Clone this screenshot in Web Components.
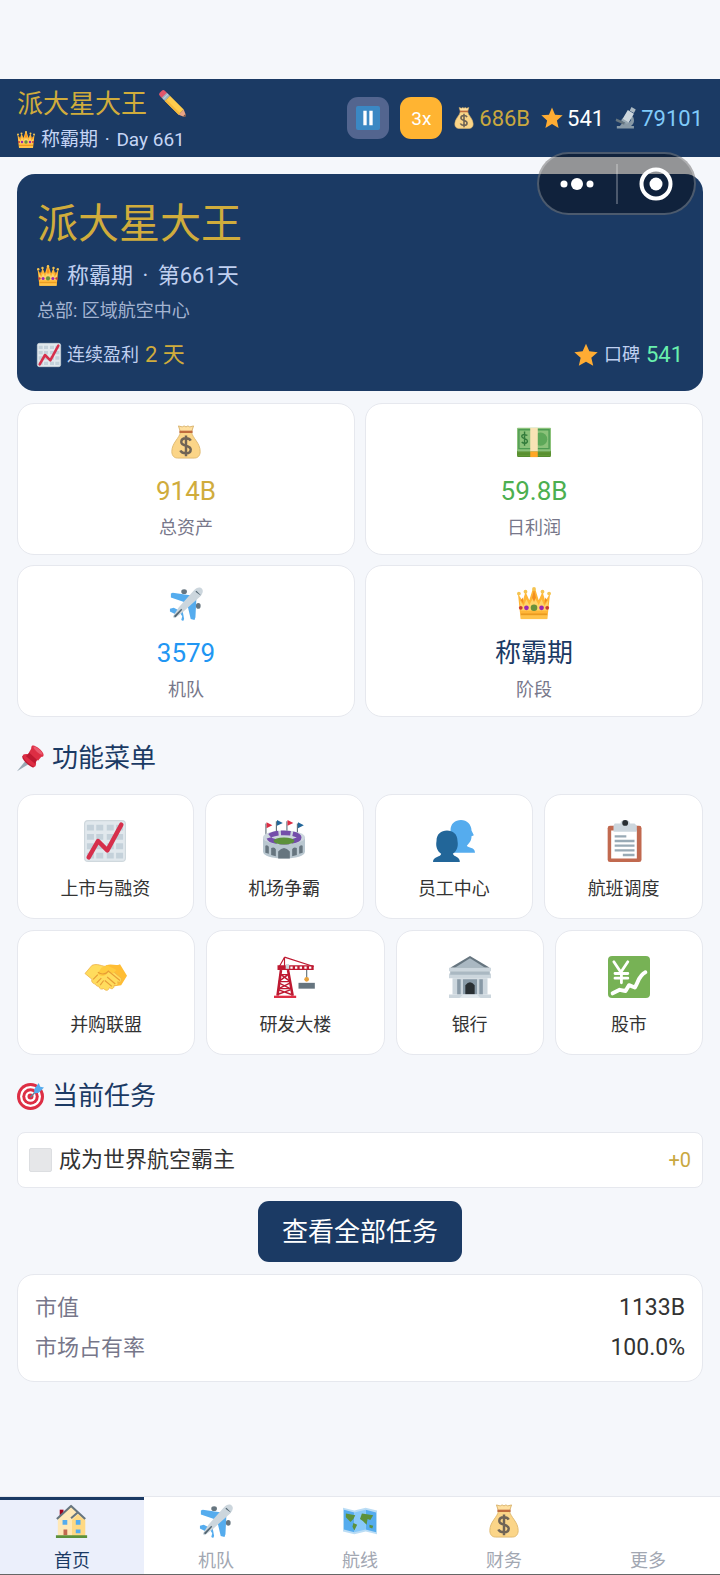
<!DOCTYPE html>
<html lang="zh-CN">
<head>
<meta charset="utf-8">
<meta name="viewport" content="width=device-width, initial-scale=1">
<title>派大星大王</title>
<style>
  body {
    margin: 0;
    background: #f5f7fb;
    color: #333;
    font-family: Roboto, "Noto Sans CJK SC", sans-serif;
    font-size: 22px;
  }
</style>
</head>
<body>
<air-app></air-app>

<script>
const ICONS = {
  pencil: `
    <g transform="rotate(45 18 18)">
      <path fill="#e0566b" d="M-3 13h5v10h-5a3 3 0 0 1-3-3v-4a3 3 0 0 1 3-3z"/>
      <path fill="#9fb4c2" d="M1 13h6v10H1z"/><path fill="#c8d6de" d="M3 13h1v10H3z"/>
      <path fill="#ffcc4d" d="M7 13h27v10H7z"/><path fill="#f5b83d" d="M7 20h27v3H7z"/>
      <path fill="#e9a587" d="M34 13l7 3q3 2 0 4l-7 3z"/><path fill="#66493f" d="M40 15.500l3 2.500-3 2.500z"/>
    </g>`,
  crown: `
    <path fill="#ffb636" d="M1 7l5 8 3-10 4 9 4-13h2l4 13 4-9 3 10 5-8-2 19-1 8H4l-1-8z"/>
    <path fill="#ffd469" d="M3 14l4 6 3-7 3 6 5-9 5 9 3-6 3 7 4-6-1 11H4z"/>
    <path fill="#f28f20" d="M6 11l1 7-3-4zm12-8l2 8-2 5-2-5zm12 8l-1 7 3-4z"/>
    <path fill="#e99a20" d="M4 28h28v2H4z"/><path fill="#ffc24a" d="M4 30h28v4H4z"/>
    <g fill="#f4c452"><circle cx="2" cy="7" r="2"/><circle cx="9" cy="5" r="2"/><circle cx="18" cy="2" r="2"/><circle cx="27" cy="5" r="2"/><circle cx="34" cy="7" r="2"/></g>
    <circle cx="18" cy="22" r="3.500" fill="#69913b"/>
    <circle cx="10" cy="22" r="2.500" fill="#9c28b1"/><circle cx="26" cy="22" r="2.500" fill="#9c28b1"/>
    <circle cx="4" cy="22" r="2" fill="#ca3b30"/><circle cx="32" cy="22" r="2" fill="#ca3b30"/>`,
  pause: `
    <rect width="36" height="36" rx="3" fill="#3b88c3"/>
    <path fill="#fff" d="M11 7h5v22h-5zm9 0h5v22h-5z"/>`,
  bag: `
    <path fill="#ffe0a0" stroke="#d9b26b" stroke-width="1" d="M12 7L10 1l4 1 2-1 2 1 2-1 2 1 4-1-2 6z"/>
    <path fill="#fbd588" stroke="#dfb970" stroke-width="1" d="M12 8h12c1 6 9 11 9 20 0 5-3 7-6 7H9c-3 0-6-2-6-7 0-9 8-14 9-20z"/>
    <path fill="#c06c3e" d="M11 6h14v2.500H11z"/>
    <path fill="none" stroke="#706456" stroke-width="2.600" d="M23 16.500c-1-2-3-2.500-5-2.500-3 0-5 1.500-5 4 0 5 10 3 10 8 0 3-2 4-5 4s-5-1-6-3M18 11v22"/>`,
  star: `<path fill="#ffac33" d="M18 1l5 11.500 12.500 1.200-9.500 8.300 2.800 12.300L18 28 7.200 34.300 10 22 .5 13.700 13 12.500z"/>`,
  microscope: `
    <path fill="#8899a6" d="M3 31h28v4H3zM8 31l4-5h9c5-2 6-5 5-9l3-2c4 7 2 13-3 16z"/>
    <path fill="#66757f" d="M2 19l14 6-1 4-14-6z"/>
    <path fill="#ccd6dd" d="M21 5l10 6-9 15-10-6z"/><path fill="#9aaab4" d="M12 19l10 6-2 3-10-6z"/>
    <path fill="#aab8c2" d="M27 0l7 4-3 6-7-4z"/>`,
  chart: `
    <rect x=".5" y=".5" width="35" height="35" rx="3" fill="#e1e8ed" stroke="#cfd8dd"/>
    <path fill="#c4d1da" d="M2.500 4h6v5h-6zm8 0h6v5h-6zm9 0h6v5h-6zm8 0h6v5h-6zM2.500 12h6v5h-6zm8 0h6v5h-6zm9 0h6v5h-6zm8 0h6v5h-6zM2.500 20h6v5h-6zm8 0h6v5h-6zm9 0h6v5h-6zm8 0h6v5h-6zM2.500 28h6v5h-6zm8 0h6v5h-6zm9 0h6v5h-6zm8 0h6v5h-6z"/>
    <path fill="none" stroke="#d62f4b" stroke-width="3.800" stroke-linecap="round" stroke-linejoin="round" d="M4 32l8-14 8 8L32 4"/>`,
  cash: `
    <path fill="#558b2f" d="M0 26h36v7l-1 1H1l-1-1z"/><path fill="#689f38" d="M0 29h36v1H0zm0 2.500h36v1H0z"/>
    <rect y="3" width="36" height="25" rx="1" fill="#8bc27a"/>
    <path fill="none" stroke="#4d9b52" stroke-width="1.500" d="M2 5h32v20H2z"/>
    <circle cx="25" cy="15" r="7" fill="#5da859"/>
    <path fill="none" stroke="#327b3b" stroke-width="1.500" d="M11 11q-6-2-6 1c0 3 6 2 6 5s-4 3-6 1M8 7v15"/>
    <path fill="#f8e3b5" d="M14 3h8v25h-8z"/><path fill="#ffa726" d="M14 28h8v6h-8z"/>`,
  plane: `
    <g fill="#66757f"><ellipse cx="16" cy="5" rx="3" ry="2.500"/><ellipse cx="31" cy="20" rx="2.500" ry="3"/></g>
    <path fill="#55acee" d="M2 7l2-1 20 3-5 8-17-6zM29 12l-1 20-1 3-4-1-4-17zM1 23l4-1 8 4-4 4-8-4zM13 35l1-4-4-6 4-2 2 11-1 2z"/>
    <path fill="#ccd6dd" d="M34 1c3 2 2 6-1 9L13 28l-7 5c-2 0-2-2-1-3l5-8L26 4c3-3 5-4 8-3z"/>
    <path fill="#536672" d="M29 4l5 5-2-1-4-3zM5 31l8-8 1 1-7 8z"/>`,
  pin: `
    <path fill="#99aab5" d="M0 35l13-16 5 5z"/>
    <path fill="#be1931" d="M7 15c4-4 8-1 12 3s7 8 3 12c-4 0-16-10-15-15z"/>
    <path fill="#dd2e44" d="M8 13c5-2 9-1 13 3s6 9 3 13c-5 0-17-10-16-16z"/>
    <path fill="#be1931" d="M17 9l11 9-4 7-12-10z"/>
    <path fill="#dd2e44" d="M20 3l13 12-5 6-12-11z"/>
    <path fill="#dd2e44" d="M20 1c4-2 18 9 15 14-3 4-20-9-15-14z"/><path fill="#ea596e" d="M22 2c3-1 13 7 12 11-2 1-13-7-12-11z"/>`,
  stadium: `
    <path fill="none" stroke="#66757f" stroke-width="1" d="M2.500 3v12m9-14v10m9-10v10M29.500 3v11"/>
    <path fill="#dd2e44" d="M3 2l5 2.500L3 7zM21 0l5 2.500L21 5z"/><path fill="#226699" d="M12 0l5 2.500L12 5zM30 2l5 2.500L30 7z"/>
    <path fill="#b9c7d0" d="M0 15h36v12c0 4-8 6-18 6S0 31 0 27z"/>
    <ellipse cx="18" cy="15" rx="18" ry="6" fill="#ccd6dd"/>
    <ellipse cx="18" cy="15" rx="13" ry="4" fill="none" stroke="#744eaa" stroke-width="4" stroke-dasharray="8 2"/>
    <ellipse cx="18" cy="18" rx="9" ry="3" fill="#5c913b"/>
    <path fill="#66757f" d="M13 33v-6q5-6 10 0v6zM2 22q2-1 3 1v6l-3-1zm5 2q3-1 4 1v6l-4-1zm27-2q-2-1-3 1v6l3-1zm-5 2q-3-1-4 1v6l4-1z"/>`,
  people: `
    <path fill="#55acee" d="M15 9C15 3 19 0 24 0s9 4 9 9l2 4-2 1c0 4-2 6-4 8 1 2 7 1 7 6H17z"/>
    <path fill="#269" d="M3 18c0-6 4-9 9-9s9 3 9 9c1 5-1 9-4 11 1 3 6 2 6 7H0c0-5 7-4 7-7-3-2-5-6-4-11z"/>`,
  clipboard: `
    <rect x="4" y="5" width="29" height="31" rx="2" fill="#c1694f"/>
    <path fill="#fff" d="M7 9h22v24H7z"/>
    <path fill="#ccd6dd" d="M10 3h5q0-3 4-3t4 3h4l2 2v5H9V5z"/>
    <circle cx="19" cy="2.500" r="2.500" fill="#292f33"/>
    <path fill="#99aab5" d="M10 13h10v2H10zm0 4h17v2H10zm0 4h17v2H10zm0 4h17v2H10zm7 4h10v2H17z"/>`,
  handshake: `
    <path fill="#ffbd34" d="M18 8c5-2 8 1 12-1l6 10-5 8-13 2-10-8z"/>
    <path fill="#ffdc5d" stroke="#eeb34b" stroke-width=".7" d="M6 8c5-2 8 1 13 1l12 10c1 3-1 4-3 3 1 3-1 4-3 3 0 3-2 4-4 2-1 3-3 3-5 1-2 1-4 0-4-2-2 0-3-1-3-2-2 0-4-2-3-4L0 15z"/>
    <path fill="#ffcb3f" d="M14 10l5-2 8 4-3 3-4-1c-3 4-7 4-9 1z"/>
    <path fill="none" stroke="#e79d36" d="M11 14c3 2 7 2 9-1l10 8M19 18l7 6M17 21l6 5M7 20l4-4m-1 7l4-4m-1 6l3-4"/>`,
  crane: `
    <path fill="none" stroke="#be1931" stroke-width="1" d="M9 1L4 10M9 1l25 8M9 1v8"/>
    <path fill="#be1931" d="M3 8h9v4H3zM12 8h22v4H12z"/><path fill="#fff" d="M14 9h2v2h-2zm4 0h2v2h-2zm4 0h2v2h-2zm4 0h2v2h-2zm4 0h2v2h-2z"/>
    <path fill="#ccd6dd" d="M10 7h3v4h-3z"/>
    <path fill="none" stroke="#be1931" stroke-width="2.200" d="M6 12L3 34M12 12l4 22"/>
    <path fill="none" stroke="#be1931" stroke-width="1.200" d="M5 16h8M5 22h9M4 28h11M6 16l8 6M12 16l-8 6M4 23l10 5M14 23L4 28M3 33l11-4M4 29l11 4"/>
    <path fill="#dd2e44" d="M0 34h19v2H0z"/>
    <path stroke="#66757f" d="M28 12v7"/><circle cx="28" cy="20" r="2" fill="#e9a23b"/><path fill="#66757f" d="M21 23h14v5H21z"/>`,
  bank: `
    <path fill="#66757f" d="M18 0l17 10H1z"/><path fill="#aab8c2" d="M18 2l13 8H5z"/>
    <path fill="#ccd6dd" d="M0 10h36v3H0zM0 15h36v4H0z"/><path fill="#aab8c2" d="M1 13h34v3H1z"/>
    <path fill="#ccd6dd" d="M3 19h30v14H3z"/><path fill="#8899a6" d="M7 20h3v13H7zm19 0h3v13h-3zM12 20h12v13H12z"/>
    <path fill="#292f33" d="M14 33v-8q4-5 8 0v8z"/>
    <path fill="#ccd6dd" d="M0 33h36v3H0z"/><path fill="#e1e8ed" d="M12 33h12l3 3H9z"/>`,
  stock: `
    <rect width="36" height="36" rx="3.500" fill="#77b255"/>
    <path fill="none" stroke="#fff" stroke-width="2.400" stroke-linecap="round" d="M5 5l6 9 6-9M6 15h11M6 19h11M11.500 14v9"/>
    <path fill="none" stroke="#fff" stroke-width="3.400" stroke-linecap="round" stroke-linejoin="round" d="M4 32l6-3 5 1 3-5 5 2c3-4 3-10 9-13"/>`,
  target: `
    <circle cx="18" cy="18" r="18" fill="#dd2e44"/><circle cx="18" cy="18" r="14" fill="#fff"/>
    <circle cx="18" cy="18" r="11" fill="#dd2e44"/><circle cx="18" cy="18" r="7" fill="#fff"/>
    <circle cx="18" cy="18" r="4" fill="#dd2e44"/>
    <path stroke="#65859a" stroke-width="2" d="M18 19L29 7"/><path fill="#55acee" d="M23 8l6-8 2 5 5 1-7 7-6 1z"/>`,
  house: `
    <path fill="#a0041e" d="M5 6h4v9H5z"/>
    <path fill="#ffe8b6" d="M3 15L17 2l15 13v19H3z"/><path fill="#ffd983" d="M18 17l6-6 8 6v17H18z"/>
    <path fill="none" stroke="#66757f" stroke-width="2.200" stroke-linejoin="round" d="M2 16L17 2l15 14M17 15l7-6"/>
    <path fill="#55acee" d="M8 17h5v5H8zm14 0h5v5h-5zm0 10h5v4h-5z"/><path fill="#c1694f" d="M9 27h4v6H9z"/>
    <path fill="#5c913b" d="M1 33h33v3H1z"/>`,
  map: `
    <path fill="#bbddf5" d="M0 4l12 3 12-3 12 3v25l-12-3-12 3-12-3z"/>
    <path fill="#55acee" d="M1 6l11 3v21L1 27zM24 6l11 3v21l-11-3z"/><path fill="#88c9f9" d="M12 9l12-3v21l-12 3z"/>
    <path fill="#5c913b" d="M3 10l10 2-2 4-3 3-5-5zm8 10l4 2-3 6-2-4zm9-10l12 2-3 5-3-1-1 6-4-4-3-2zm8 12l4 1-1 3-3-1z"/>`
};

class AirIcon extends HTMLElement {
  constructor() {
    super();
    this.attachShadow({ mode: "open" });
  }

  connectedCallback() {
    this.shadowRoot.innerHTML = `
      <style>
        :host { display: block; flex: none; width: var(--icon-size, 34px); height: var(--icon-size, 34px); }
        svg { display: block; width: 100%; height: 100%; overflow: visible; }
      </style>
      <svg viewBox="0 0 36 36" aria-hidden="true">${ICONS[this.getAttribute("name")] || ""}</svg>
    `;
  }
}
customElements.define("air-icon", AirIcon);

// small helper: every other element only needs static markup
function define(name, html) {
  const template = document.createElement("template");
  template.innerHTML = html;
  customElements.define(name, class extends HTMLElement {
    constructor() {
      super();
      this.attachShadow({ mode: "open" }).appendChild(template.content.cloneNode(true));
    }
  });
}

define("air-topbar", `
  <style>
    :host {
      display: flex;
      align-items: center;
      justify-content: space-between;
      box-sizing: border-box;
      min-height: 78px;
      padding: 0 17px;
      background: #1b3a64;
      color: #c5d5f5;
    }
    .company { padding-top: 6px; }
    .name, .stage, .tools, .coin { display: flex; align-items: center; }
    .name { gap: 13px; font-size: 26px; line-height: 38px; color: #d0ac3c; --icon-size: 26px; }
    .stage { gap: 6px; font-size: 19px; line-height: 34px; --icon-size: 18px; }
    .dot { margin: 0 2px; }
    .tools { gap: 11px; font-size: 22px; }
    .coin { gap: 4px; --icon-size: 22px; }
    .edit { padding: 0; border: 0; background: none; }
    .tool {
      display: flex;
      align-items: center;
      justify-content: center;
      width: 42px;
      height: 42px;
      padding: 0;
      border: 0;
      border-radius: 11px;
      background: #53658f;
      color: #fff;
      font: inherit;
      font-size: 19px;
      --icon-size: 24px;
    }
    .speed { background: #ffb432; }
    .gold { color: #c9a83f; }
    .rep { color: #fff; }
    .tech { color: #80cbfa; }
  </style>
  <div class="company">
    <div class="name"><span>派大星大王</span><button class="edit" aria-label="改名"><air-icon name="pencil"></air-icon></button></div>
    <div class="stage"><air-icon name="crown"></air-icon><span>称霸期 <span class="dot">·</span> Day 661</span></div>
  </div>
  <div class="tools">
    <button class="tool" aria-label="暂停"><air-icon name="pause"></air-icon></button>
    <button class="tool speed">3x</button>
    <span class="coin gold"><air-icon name="bag"></air-icon>686B</span>
    <span class="coin rep"><air-icon name="star"></air-icon>541</span>
    <span class="coin tech"><air-icon name="microscope"></air-icon>79101</span>
  </div>
`);

// floating menu of the host app, sits over the page
define("air-capsule", `
  <style>
    :host {
      position: absolute;
      top: 152px;
      right: 24px;
      display: flex;
      align-items: center;
      box-sizing: border-box;
      width: 159px;
      height: 63px;
      border: 2px solid rgba(255, 255, 255, 0.25);
      border-radius: 32px;
      background: rgba(0, 0, 0, 0.4);
    }
    button { flex: 1; display: flex; justify-content: center; padding: 0; border: 0; background: none; }
    i { width: 2px; height: 40px; background: rgba(255, 255, 255, 0.25); }
  </style>
  <button aria-label="更多"><svg width="34" height="34" viewBox="0 0 34 34" fill="#fff"><circle cx="4" cy="17" r="3.500"/><circle cx="17" cy="17" r="6"/><circle cx="30" cy="17" r="3.500"/></svg></button>
  <i></i>
  <button aria-label="关闭"><svg width="34" height="34" viewBox="0 0 34 34"><circle cx="17" cy="17" r="14.500" fill="none" stroke="#fff" stroke-width="4"/><circle cx="17" cy="17" r="6.500" fill="#fff"/></svg></button>
`);

define("air-hero", `
  <style>
    :host {
      display: block;
      padding: 21px 20px 20px;
      border-radius: 18px;
      background: #1b3a64;
      color: #c0d0f0;
    }
    h1 { margin: 0 0 7px; font-size: 41px; font-weight: 400; line-height: 58px; color: #d0ac3c; }
    p { margin: 0; }
    .stage { display: flex; align-items: center; gap: 8px; line-height: 32px; --icon-size: 22px; }
    .dot { margin: 0 4px; }
    .hq { margin: 5px 0 14px; font-size: 18px; line-height: 28px; color: #a4b4d2; }
    .foot { display: flex; justify-content: space-between; line-height: 32px; --icon-size: 24px; }
    .foot p { display: flex; align-items: center; gap: 6px; }
    small { font-size: 18px; }
    .days { color: #d0ac3c; }
    .rep { color: #69f0ae; }
  </style>
  <h1>派大星大王</h1>
  <p class="stage"><air-icon name="crown"></air-icon><span>称霸期 <span class="dot">·</span> 第661天</span></p>
  <p class="hq">总部: 区域航空中心</p>
  <div class="foot">
    <p><air-icon name="chart"></air-icon><small>连续盈利</small><span class="days">2 天</span></p>
    <p><air-icon name="star"></air-icon><small>口碑</small><span class="rep">541</span></p>
  </div>
`);

define("air-stat", `
  <style>
    :host {
      display: flex;
      flex-direction: column;
      align-items: center;
      padding: 21px 10px 13px;
      border: 1px solid #e6e8ee;
      border-radius: 17px;
      background: #fff;
    }
    .value { margin: 12px 0 4px; font-size: 26px; line-height: 40px; color: var(--tone); }
    .label { font-size: 18px; line-height: 26px; color: #77778a; }
  </style>
  <slot name="icon"></slot>
  <div class="value"><slot></slot></div>
  <div class="label"><slot name="label"></slot></div>
`);

define("air-title", `
  <style>
    :host { display: block; margin: 23px 0 18px; }
    h2 { display: flex; align-items: center; gap: 8px; margin: 0; font-size: 26px; font-weight: 400; line-height: 36px; color: #1b3a64; --icon-size: 27px; }
  </style>
  <h2><slot name="icon"></slot><span><slot></slot></span></h2>
`);

define("air-menu-item", `
  <style>
    :host { display: block; flex: 1 1 auto; }
    button {
      display: flex;
      flex-direction: column;
      align-items: center;
      gap: 13px;
      width: 100%;
      padding: 25px 28px 15px;
      border: 1px solid #e6e8ee;
      border-radius: 17px;
      background: #fff;
      color: #333;
      font: inherit;
      font-size: 18px;
      line-height: 28px;
      --icon-size: 42px;
    }
  </style>
  <button><slot name="icon"></slot><span><slot></slot></span></button>
`);

define("air-task", `
  <style>
    :host {
      display: flex;
      align-items: center;
      justify-content: space-between;
      padding: 10px 11px;
      border: 1px solid #e6e8ee;
      border-radius: 8px;
      background: #fff;
      line-height: 34px;
    }
    label { display: flex; align-items: center; gap: 7px; }
    input { appearance: none; width: 23px; height: 24px; margin: 0; border: 1px solid #dcdee1; border-radius: 2px; background: #e6e7e9; }
    .reward { font-size: 20px; color: #c9a83f; }
  </style>
  <label><input type="checkbox"><span><slot></slot></span></label>
  <span class="reward"><slot name="reward"></slot></span>
`);

define("air-button", `
  <style>
    :host { display: block; }
    button {
      display: block;
      margin: 0 auto;
      padding: 12px 24px 11px;
      border: 0;
      border-radius: 11px;
      background: #1b3a64;
      color: #fff;
      font: inherit;
      font-size: 26px;
      line-height: 38px;
    }
  </style>
  <button><slot></slot></button>
`);

define("air-facts", `
  <style>
    :host { display: block; padding: 13px 17px; border: 1px solid #e6e8ee; border-radius: 17px; background: #fff; }
    dl { margin: 0; }
    div { display: flex; justify-content: space-between; line-height: 40px; }
    dt { color: #77778a; }
    dd { margin: 0; font-size: 23px; }
  </style>
  <dl>
    <div><dt>市值</dt><dd>1133B</dd></div>
    <div><dt>市场占有率</dt><dd>100.0%</dd></div>
  </dl>
`);

class AirTab extends HTMLElement {
  constructor() {
    super();
    this.attachShadow({ mode: "open" });
    this.shadowRoot.innerHTML = `
      <style>
        :host { display: block; flex: 1 1 0; }
        a {
          display: flex;
          flex-direction: column;
          align-items: center;
          gap: 10px;
          height: 100%;
          box-sizing: border-box;
          padding-top: 4px;
          border-top: 3px solid transparent;
          color: #a2a7b2;
          font-size: 18px;
          line-height: 26px;
          text-decoration: none;
        }
        :host([active]) a { border-color: #1b3a64; background: #ebeffb; color: #1b3a64; }
      </style>
      <a href="#"><air-icon></air-icon><span><slot></slot></span></a>
    `;
  }

  connectedCallback() {
    const icon = this.shadowRoot.querySelector("air-icon");
    icon.setAttribute("name", this.getAttribute("icon") || "");
    icon.connectedCallback();
  }
}
customElements.define("air-tab", AirTab);

define("air-tabs", `
  <style>
    :host { display: block; }
    nav {
      display: flex;
      border-bottom: 1px solid #666;
      background: #fff;
      box-shadow: 0 -1px 0 #e6e8ee;
    }
  </style>
  <nav>
    <air-tab icon="house" active>首页</air-tab>
    <air-tab icon="plane">机队</air-tab>
    <air-tab icon="map">航线</air-tab>
    <air-tab icon="bag">财务</air-tab>
    <air-tab>更多</air-tab>
  </nav>
`);

define("air-app", `
  <style>
    :host {
      position: relative;
      display: flex;
      flex-direction: column;
      box-sizing: border-box;
      min-height: 100vh;
      padding-top: 79px;
    }
    main { flex: 1; padding: 17px 17px 24px; }
    .stats { display: grid; grid-template-columns: 1fr 1fr; gap: 10px; margin-top: 12px; }
    .menu { display: flex; flex-wrap: wrap; gap: 11px; }
    air-button { margin: 13px 0 12px; }
  </style>
  <air-topbar></air-topbar>
  <main>
    <air-hero></air-hero>
    <div class="stats">
      <air-stat style="--tone: #d0ac3c"><air-icon slot="icon" name="bag"></air-icon>914B<span slot="label">总资产</span></air-stat>
      <air-stat style="--tone: #4caf50"><air-icon slot="icon" name="cash"></air-icon>59.8B<span slot="label">日利润</span></air-stat>
      <air-stat style="--tone: #2196f3"><air-icon slot="icon" name="plane"></air-icon>3579<span slot="label">机队</span></air-stat>
      <air-stat style="--tone: #1b3a64"><air-icon slot="icon" name="crown"></air-icon>称霸期<span slot="label">阶段</span></air-stat>
    </div>

    <air-title><air-icon slot="icon" name="pin"></air-icon>功能菜单</air-title>
    <div class="menu">
      <air-menu-item><air-icon slot="icon" name="chart"></air-icon>上市与融资</air-menu-item>
      <air-menu-item><air-icon slot="icon" name="stadium"></air-icon>机场争霸</air-menu-item>
      <air-menu-item><air-icon slot="icon" name="people"></air-icon>员工中心</air-menu-item>
      <air-menu-item><air-icon slot="icon" name="clipboard"></air-icon>航班调度</air-menu-item>
      <air-menu-item><air-icon slot="icon" name="handshake"></air-icon>并购联盟</air-menu-item>
      <air-menu-item><air-icon slot="icon" name="crane"></air-icon>研发大楼</air-menu-item>
      <air-menu-item><air-icon slot="icon" name="bank"></air-icon>银行</air-menu-item>
      <air-menu-item><air-icon slot="icon" name="stock"></air-icon>股市</air-menu-item>
    </div>

    <air-title><air-icon slot="icon" name="target"></air-icon>当前任务</air-title>
    <air-task>成为世界航空霸主<span slot="reward">+0</span></air-task>
    <air-button>查看全部任务</air-button>
    <air-facts></air-facts>
  </main>
  <air-tabs></air-tabs>
  <air-capsule></air-capsule>
`);
</script>
</body>
</html>
